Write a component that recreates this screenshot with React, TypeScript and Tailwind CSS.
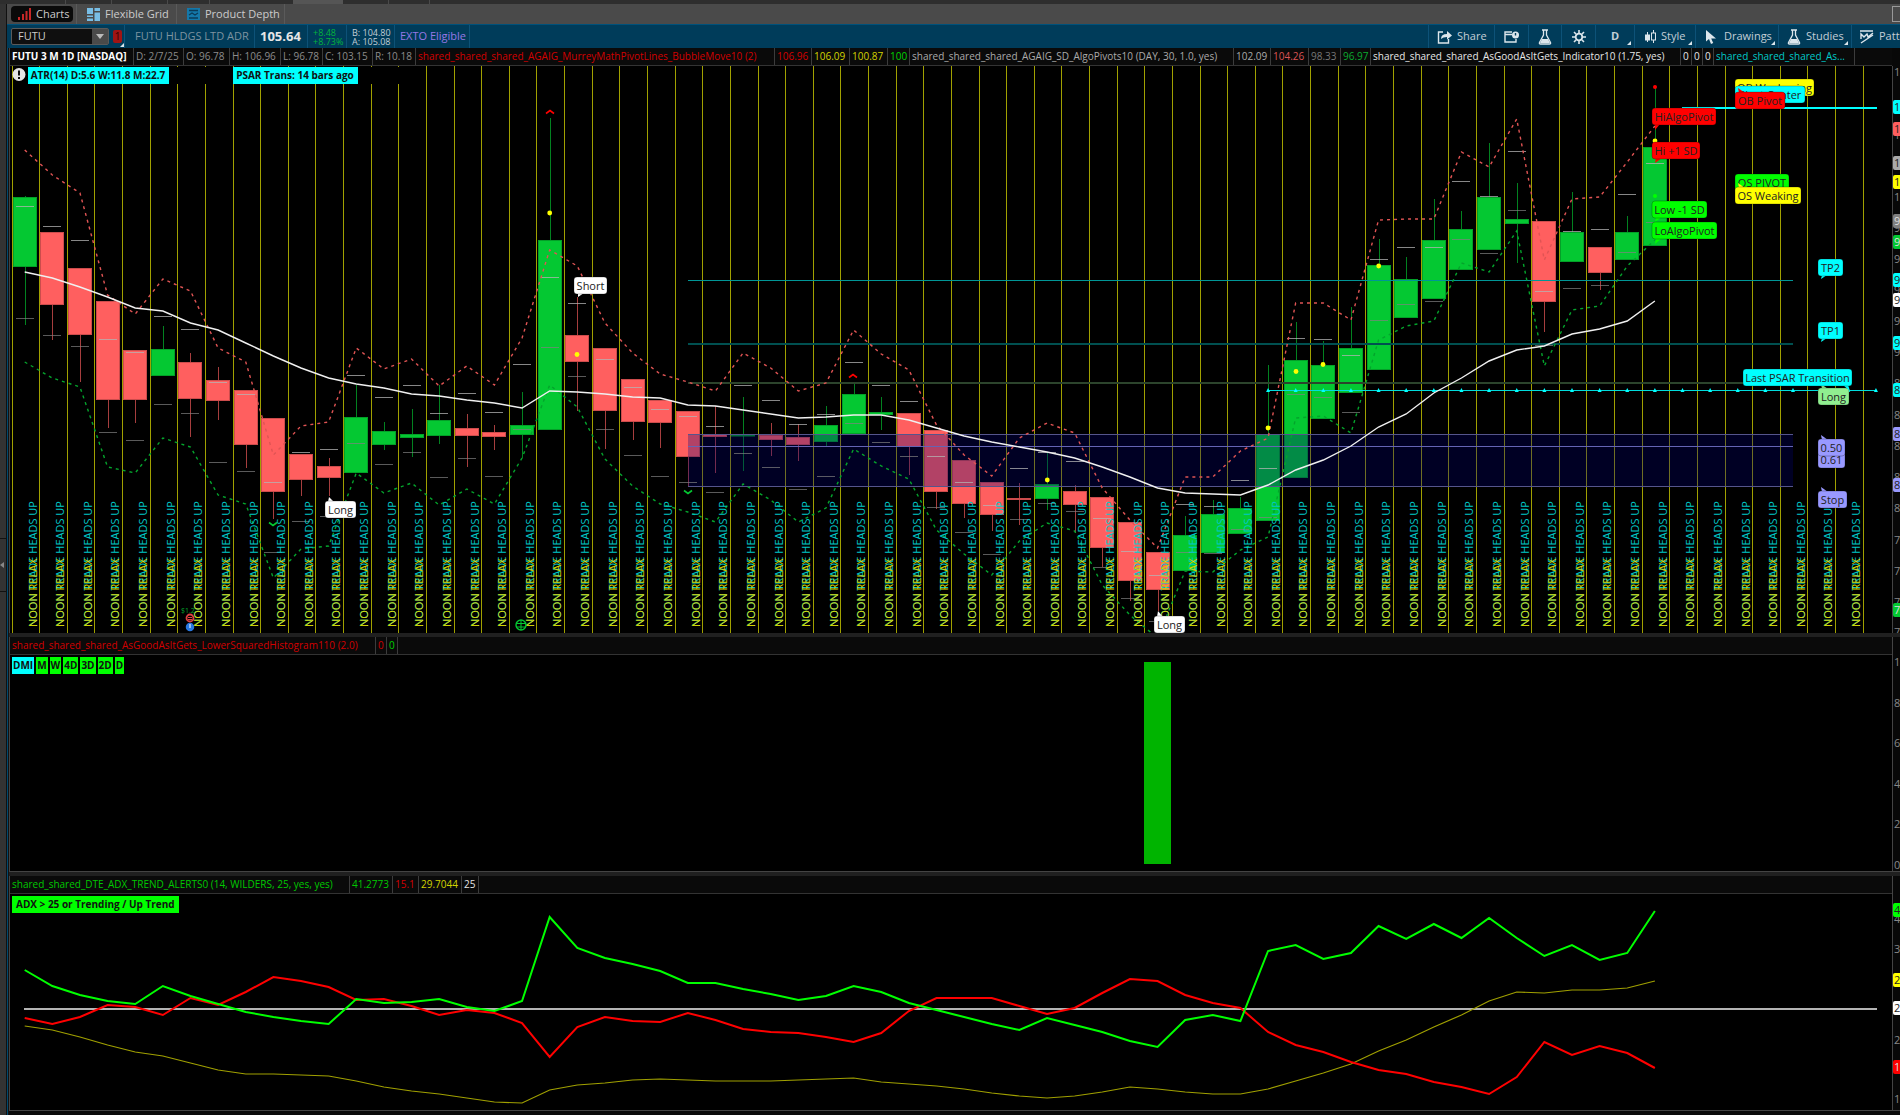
type Candle = [dir: 'g' | 'r', top: number, bottom: number, high: number, low: number];

const X0 = 24.7;
const STEP = 27.63;
const cx = (i: number) => X0 + STEP * i;

// body top, body bottom, wick top, wick bottom
const candles: Candle[] = [
  ['g', 197, 267, 196, 325], ['r', 232, 305, 232, 340], ['r', 268, 335, 268, 382], ['r', 301, 400, 301, 428],
  ['r', 350, 400, 350, 423], ['g', 349, 376, 326, 376], ['r', 362, 399, 353, 437], ['r', 380, 401, 367, 420],
  ['r', 390, 445, 390, 468], ['r', 418, 492, 418, 519], ['r', 454, 480, 454, 496], ['r', 466, 478, 458, 496],
  ['g', 417, 473, 385, 473], ['g', 431, 445, 422, 450], ['g', 434, 438, 409, 457], ['g', 420, 436, 385, 444],
  ['r', 428, 436, 414, 467], ['r', 432, 437, 425, 450], ['g', 425, 435, 392, 458], ['g', 240, 430, 118, 430],
  ['r', 335, 362, 297, 411], ['r', 348, 411, 348, 449], ['r', 379, 422, 379, 440], ['r', 400, 423, 400, 448],
  ['r', 411, 457, 411, 486], ['r', 434, 437, 406, 473], ['g', 435, 436, 397, 471], ['r', 435, 440, 423, 456],
  ['r', 437, 445, 424, 461], ['g', 425, 442, 406, 446], ['g', 394, 434, 383, 434], ['g', 412, 415, 397, 430],
  ['r', 413, 447, 413, 475], ['r', 430, 492, 430, 509], ['r', 460, 504, 460, 518], ['r', 482, 515, 482, 531],
  ['r', 498, 500, 483, 525], ['g', 484, 499, 452, 510], ['r', 491, 505, 485, 533], ['r', 497, 548, 497, 567],
  ['r', 522, 581, 522, 601], ['r', 552, 590, 552, 611], ['g', 535, 571, 516, 571], ['g', 514, 553, 500, 553],
  ['g', 508, 534, 497, 534], ['g', 434, 521, 365, 521], ['g', 360, 478, 322, 478], ['g', 365, 419, 341, 419],
  ['g', 348, 393, 307, 393], ['g', 265, 370, 239, 370], ['g', 279, 318, 257, 318], ['g', 240, 299, 199, 299],
  ['g', 229, 270, 211, 270], ['g', 197, 250, 143, 250], ['g', 219, 224, 183, 263], ['r', 221, 302, 221, 332],
  ['g', 232, 262, 192, 262], ['r', 247, 273, 247, 290], ['g', 232, 260, 216, 260], ['g', 147, 246, 87, 246],
];

const pivots = [
  [206, 318], [226, 335], [240, 346], [339, 432], [352, 440], [316, 404], [329, 413], [382, 462], [394, 471], [482, 552],
  [452, 521], [449, 516], [375, 443], [397, 464], [385, 452], [413, 477], [393, 458], [412, 476], [364, 429], [277, 347],
  [303, 376], [359, 429], [387, 455], [409, 476], [416, 482], [426, 492], [385, 453], [400, 467], [424, 489], [414, 476],
  [362, 423], [385, 442], [401, 456], [456, 507], [482, 532], [505, 554], [468, 519], [452, 503], [461, 511], [518, 567],
  [551, 598], [575, 621], [504, 552], [506, 553], [480, 529], [468, 517], [338, 394], [339, 397], [355, 412], [259, 320],
  [247, 304], [247, 301], [181, 239], [196, 253], [151, 210], [291, 345], [231, 288], [229, 285], [194, 252], [163, 222],
];

const upperBand = [
  150, 175, 193, 295, 314, 279, 291, 348, 362, 455, 426, 422, 348, 369, 359, 386, 366, 385, 338, 250,
  266, 323, 353, 374, 382, 391, 353, 368, 391, 383, 330, 354, 370, 425, 455, 476, 438, 423, 433, 488,
  520, 548, 477, 477, 451, 438, 303, 303, 320, 220, 219, 219, 152, 167, 119, 260, 199, 197, 162, 126,
];

const lowerBand = [
  362, 378, 387, 467, 473, 438, 447, 495, 504, 578, 549, 546, 473, 493, 483, 505, 489, 504, 458, 385,
  407, 459, 486, 504, 512, 522, 484, 500, 522, 508, 449, 466, 479, 530, 554, 575, 541, 523, 531, 585,
  615, 638, 571, 572, 550, 537, 418, 416, 433, 340, 326, 321, 263, 272, 231, 366, 310, 306, 266, 240,
];

const average = [
  272, 278, 287, 297, 308, 311, 323, 330, 343, 356, 368, 378, 384, 388, 394, 396, 400, 403, 408, 391,
  392, 394, 397, 398, 405, 406, 410, 414, 418, 417, 415, 415, 420, 428, 436, 442, 447, 452, 458, 467,
  477, 488, 493, 494, 495, 485, 470, 460, 446, 427, 414, 393, 378, 361, 350, 346, 334, 329, 321, 301,
];

const diPlus = [
  970, 986, 995, 1001, 1004, 986, 996, 1004, 1012, 1017, 1021, 1024, 999, 1003, 1002, 999, 1007, 1011, 1001, 917,
  948, 958, 964, 971, 983, 983, 989, 994, 1000, 996, 986, 992, 1003, 1010, 1017, 1024, 1030, 1018, 1025, 1032,
  1041, 1047, 1020, 1015, 1021, 951, 945, 959, 953, 926, 939, 924, 938, 918, 938, 956, 945, 960, 953, 911,
];

const diMinus = [
  1018, 1024, 1017, 1005, 1007, 1015, 998, 1005, 992, 977, 981, 987, 1000, 999, 1006, 1015, 1010, 1013, 1023, 1057,
  1027, 1017, 1021, 1022, 1013, 1020, 1029, 1032, 1033, 1037, 1042, 1033, 1011, 998, 998, 998, 1006, 1014, 1008, 993,
  979, 981, 995, 1003, 1008, 1032, 1045, 1052, 1062, 1070, 1074, 1082, 1087, 1094, 1077, 1042, 1055, 1046, 1053, 1068,
];

const adx = [
  1026, 1030, 1037, 1045, 1052, 1056, 1063, 1070, 1074, 1074, 1075, 1076, 1081, 1087, 1091, 1094, 1098, 1102, 1103, 1090,
  1085, 1083, 1080, 1079, 1080, 1081, 1081, 1081, 1080, 1079, 1078, 1082, 1084, 1086, 1089, 1093, 1096, 1098, 1096, 1092,
  1087, 1089, 1092, 1094, 1094, 1089, 1081, 1073, 1064, 1051, 1040, 1027, 1015, 1001, 992, 993, 990, 990, 988, 981,
];

const points = (values: number[]) => values.map((y, i) => `${cx(i)},${y}`).join(' ');

type Bubble = { x: number; y: number; w: number; fill: string; text: string; tail?: string };

const bubbles: Bubble[] = [
  { x: 574, y: 277, w: 33, fill: '#ffffff', text: 'Short', tail: '578,293 584,293 578,297' },
  { x: 325, y: 501, w: 31, fill: '#ffffff', text: 'Long', tail: '329,497 328,502 334,502' },
  { x: 1154, y: 616, w: 31, fill: '#ffffff', text: 'Long', tail: '1158,611 1157,617 1163,617' },
  { x: 1652, y: 108, w: 64, fill: '#ff0000', text: 'HiAlgoPivot', tail: '1655,124 1660,124 1655,130' },
  { x: 1652, y: 142, w: 48, fill: '#ff0000', text: 'Hi +1 SD', tail: '1656,158 1662,158 1655,163' },
  { x: 1652, y: 201, w: 55, fill: '#00ff00', text: 'Low -1 SD', tail: '1656,217 1662,217 1655,222' },
  { x: 1652, y: 222, w: 65, fill: '#00ff00', text: 'LoAlgoPivot', tail: '1656,238 1662,238 1655,244' },
  { x: 1735, y: 79, w: 79, fill: '#ffff00', text: 'OB Weakening' },
  { x: 1735, y: 86, w: 70, fill: '#00ffff', text: 'Pivot Center' },
  { x: 1735, y: 92, w: 50, fill: '#ff0000', text: 'OB Pivot', tail: '1738,88 1739,93 1745,93' },
  { x: 1735, y: 174, w: 54, fill: '#00ff00', text: 'OS PIVOT' },
  { x: 1735, y: 187, w: 66, fill: '#ffff00', text: 'OS Weaking', tail: '1738,183 1739,188 1745,188' },
  { x: 1818, y: 259, w: 25, fill: '#00ffff', text: 'TP2', tail: '1822,275 1827,275 1821,279' },
  { x: 1818, y: 322, w: 25, fill: '#00ffff', text: 'TP1', tail: '1822,338 1827,338 1821,342' },
  { x: 1818, y: 388, w: 31, fill: '#90ee90', text: 'Long', tail: '1821,384 1822,389 1828,389' },
  { x: 1743, y: 369, w: 109, fill: '#00ffff', text: 'Last PSAR Transition', tail: '1843,385 1848,385 1850,391' },
  { x: 1818, y: 451, w: 27, fill: '#9999ff', text: '0.61' },
  { x: 1818, y: 439, w: 27, fill: '#9999ff', text: '0.50', tail: '1821,435 1822,440 1828,440' },
  { x: 1818, y: 491, w: 29, fill: '#9999ff', text: 'Stop', tail: '1821,487 1822,492 1828,492' },
];

type Tick = { y: number; text: string; fill?: string; ink?: string };

const priceTicks: Tick[] = [
  { y: 72, text: '108' }, { y: 135, text: '104' }, { y: 197, text: '100' }, { y: 228, text: '98' }, { y: 259, text: '96' },
  { y: 290, text: '94' }, { y: 321, text: '92' }, { y: 352, text: '90' }, { y: 383, text: '88' }, { y: 415, text: '86' },
  { y: 446, text: '84' }, { y: 477, text: '82' }, { y: 508, text: '80' }, { y: 540, text: '78' }, { y: 571, text: '76' },
  { y: 602, text: '74' }, { y: 632, text: '72' },
  { y: 107, text: '106', fill: '#00ffff' }, { y: 129, text: '104', fill: '#ff5f5f' }, { y: 163, text: '102', fill: '#aaaaaa' },
  { y: 182, text: '100', fill: '#ffff00' }, { y: 221, text: '98', fill: '#808080', ink: '#ddd' },
  { y: 242, text: '97', fill: '#04c832', ink: '#ddd' }, { y: 280, text: '94', fill: '#00ffff' },
  { y: 300, text: '93', fill: '#ffffff' }, { y: 343, text: '90', fill: '#00ffff' }, { y: 390, text: '87', fill: '#00ffff' },
  { y: 434, text: '84', fill: '#9999ff' }, { y: 485, text: '81', fill: '#9999ff' },
  { y: 610, text: '73', fill: '#04c832', ink: '#ddd' },
];

const histTicks: Tick[] = [
  { y: 662, text: '100' }, { y: 703, text: '80' }, { y: 743, text: '60' }, { y: 784, text: '40' }, { y: 824, text: '20' },
  { y: 865, text: '0%' },
];

const adxTicks: Tick[] = [
  { y: 919, text: '40' }, { y: 949, text: '35' }, { y: 1040, text: '20' }, { y: 1099, text: '10' },
  { y: 910, text: '41', fill: '#00ff00' }, { y: 980, text: '29', fill: '#ffff00' }, { y: 1008, text: '25', fill: '#ffffff' },
  { y: 1067, text: '15', fill: '#ff0000', ink: '#ddd' },
];

const dots = [[549.7, 213], [577, 354.5], [1047.3, 480], [1268, 428], [1296, 371.5], [1323, 364.5], [1378.7, 266], [1655, 141]];

type Cell = { text: string; color: string; width: string; bold?: boolean };

const mainStudies: Cell[] = [
  { text: 'FUTU 3 M 1D [NASDAQ]', color: 'text-white', width: 'w-[124px]', bold: true },
  { text: 'D: 2/7/25', color: 'text-[#8c8c8c]', width: 'w-[50px]' },
  { text: 'O: 96.78', color: 'text-[#8c8c8c]', width: 'w-[46px]' },
  { text: 'H: 106.96', color: 'text-[#8c8c8c]', width: 'w-[51px]' },
  { text: 'L: 96.78', color: 'text-[#8c8c8c]', width: 'w-[42px]' },
  { text: 'C: 103.15', color: 'text-[#8c8c8c]', width: 'w-[50px]' },
  { text: 'R: 10.18', color: 'text-[#8c8c8c]', width: 'w-[43px]' },
  { text: 'shared_shared_shared_AGAIG_MurreyMathPivotLines_BubbleMove10 (2)', color: 'text-[#d20000]', width: 'w-[359px]' },
  { text: '106.96', color: 'text-[#d20000]', width: 'w-[37px]' },
  { text: '106.09', color: 'text-[#d2d200]', width: 'w-[38px]' },
  { text: '100.87', color: 'text-[#d2d200]', width: 'w-[38px]' },
  { text: '100', color: 'text-[#00d200]', width: 'w-[22px]' },
  { text: 'shared_shared_shared_AGAIG_SD_AlgoPivots10 (DAY, 30, 1.0, yes)', color: 'text-[#aaa]', width: 'w-[324px]' },
  { text: '102.09', color: 'text-[#aaa]', width: 'w-[37px]' },
  { text: '104.26', color: 'text-[#dc5454]', width: 'w-[38px]' },
  { text: '98.33', color: 'text-[#777]', width: 'w-[32px]' },
  { text: '96.97', color: 'text-[#0aaa30]', width: 'w-[30px]' },
  { text: 'shared_shared_shared_AsGoodAsItGets_Indicator10 (1.75, yes)', color: 'text-[#e6e6e6]', width: 'w-[310px]' },
  { text: '0', color: 'text-[#e6e6e6]', width: 'w-[11px]' },
  { text: '0', color: 'text-[#e6e6e6]', width: 'w-[11px]' },
  { text: '0', color: 'text-[#e6e6e6]', width: 'w-[11px]' },
  { text: 'shared_shared_shared_As...', color: 'text-[#00c8c8]', width: 'w-[141px]' },
];

const histStudies: Cell[] = [
  { text: 'shared_shared_shared_AsGoodAsItGets_LowerSquaredHistogram110 (2.0)', color: 'text-[#d20000]', width: 'w-[366px]' },
  { text: '0', color: 'text-[#d20000]', width: 'w-[11px]' },
  { text: '0', color: 'text-[#00d200]', width: 'w-[11px]' },
];

const adxStudies: Cell[] = [
  { text: 'shared_shared_DTE_ADX_TREND_ALERTS0 (14, WILDERS, 25, yes, yes)', color: 'text-[#00c800]', width: 'w-[340px]' },
  { text: '41.2773', color: 'text-[#00c800]', width: 'w-[43px]' },
  { text: '15.1', color: 'text-[#d20000]', width: 'w-[26px]' },
  { text: '29.7044', color: 'text-[#d2d200]', width: 'w-[43px]' },
  { text: '25', color: 'text-[#e6e6e6]', width: 'w-[17px]' },
];

function StudyRow({ cells }: { cells: Cell[] }) {
  return (
    <div className="flex h-[18px] overflow-hidden border-b border-[#333] bg-[#0a0a0a] text-[10px] leading-[17px] whitespace-nowrap">
      {cells.map((cell, i) => (
        <span
          key={i}
          className={`shrink-0 border-r border-[#3c3c3c] pl-[2px] ${cell.width} ${cell.color} ${cell.bold ? 'font-bold' : ''}`}
        >
          {cell.text}
        </span>
      ))}
    </div>
  );
}

function Axis({ top, height, ticks }: { top: number; height: number; ticks: Tick[] }) {
  return (
    <div className="w-2 shrink-0 overflow-hidden border-l border-[#444] bg-[#080808]">
      <svg className="block w-[30px]" viewBox={`1893 ${top} 30 ${height}`} height={height} fontSize="11">
        {ticks.map((t) => (
          <g key={t.y}>
            {t.fill && <rect x="1893" y={t.y - 7} width="40" height="14" rx="2" fill={t.fill} />}
            <text x="1894" y={t.y + 4} fill={t.fill ? t.ink ?? '#222' : '#888'}>
              {t.text}
            </text>
          </g>
        ))}
      </svg>
    </div>
  );
}

function PriceChart() {
  const grid = Array.from({ length: 68 }, (_, i) => Math.round(11.5 + STEP * i));
  return (
    <svg className="block h-auto w-full" viewBox="10 66 1882 567" role="img" aria-label="FUTU price chart">
      {grid.map((x) => (
        <rect key={x} x={x} y="66" width="1" height="567" fill="#a0a000" />
      ))}
      <rect x="169" y="67" width="63" height="17" fill="#000" />
      <rect x="358" y="67" width="43" height="17" fill="#000" />

      {candles.map(([dir, top, bottom, high, low], i) => (
        <g key={i}>
          <rect x={Math.round(cx(i))} y={high} width="1" height={low - high} fill={dir === 'g' ? '#028220' : '#a63e3e'} />
          <rect
            x={Math.round(cx(i)) - 11.5}
            y={top + 0.5}
            width="23"
            height={Math.max(bottom - top - 1, 0.5)}
            fill={dir === 'g' ? '#04c832' : '#ff5f5f'}
            stroke={dir === 'g' ? '#03a028' : '#cc4c4c'}
          />
        </g>
      ))}
      <rect x="688" y="434" width="1105" height="53" fill="#000078" fillOpacity="0.3" />

      {pivots.map(([hi, lo], i) => (
        <g key={i}>
          <rect x={Math.round(cx(i)) - 9} y={hi} width="18" height="1" fill="#b4b4b4" fillOpacity="0.75" />
          <rect x={Math.round(cx(i)) - 9} y={lo} width="18" height="1" fill="#808080" fillOpacity="0.7" />
        </g>
      ))}

      <rect x="688" y="280" width="1105" height="1" fill="#009696" />
      <rect x="688" y="343" width="1105" height="2" fill="#005050" />
      <rect x="688" y="382" width="1105" height="2" fill="#2c442c" />
      <rect x="688" y="434" width="1105" height="1" fill="#55558c" />
      <rect x="688" y="446" width="1105" height="1" fill="#6464b4" />
      <rect x="688" y="486" width="1105" height="1" fill="#55558c" />
      <rect x="1682" y="107" width="195" height="2" fill="#00ffff" />
      <rect x="1268" y="390" width="609" height="1" fill="#00dcdc" />
      {Array.from({ length: 23 }, (_, i) => cx(45 + i)).map((x) => (
        <path key={x} d={`M${x - 2} 392 L${x} 388 L${x + 2} 392Z`} fill="#00ffff" />
      ))}

      <polyline points={points(upperBand)} fill="none" stroke="#e05454" strokeWidth="1.4" strokeDasharray="3 4" />
      <polyline points={points(lowerBand)} fill="none" stroke="#04a42c" strokeWidth="1.4" strokeDasharray="3 4" />
      <polyline points={points(average)} fill="none" stroke="#f0f0f0" strokeWidth="1.4" />

      {grid.slice(0, -1).map((x) => (
        <g key={x} fontSize="11" transform={`translate(${x + 25} 627) rotate(-90)`}>
          <text fill="#00c8c8">NOON TRADE HEADS UP</text>
          <text fill="#d2d200">NOON RELAX</text>
        </g>
      ))}

      {dots.map(([x, y]) => (
        <circle key={x} cx={x} cy={y} r="2.4" fill="#ffff00" />
      ))}
      <circle cx="1655" cy="87" r="2" fill="#ff0000" />
      <circle cx="1655" cy="196" r="2" fill="#00ff00" />
      <path d="M546 113.500 L550 110.500 L554 113.500 M849 377.500 L853 374.500 L857 377.500" fill="none" stroke="#ff0000" strokeWidth="1.6" />
      <path d="M269 522.500 L273 525.500 L277 522.500 M684 490.500 L688 493.500 L692 490.500" fill="none" stroke="#04c832" strokeWidth="1.6" />

      <text x="181" y="613" fontSize="7" fill="#04a42c">$1.2</text>
      <circle cx="190" cy="618" r="3.500" fill="none" stroke="#e04040" strokeWidth="1.8" />
      <circle cx="190" cy="627" r="3.500" fill="#2878e0" stroke="#2878e0" strokeWidth="1.5" />
      <path d="M188 617.500h4M188 619.500h4" stroke="#e04040" />
      <path d="M190 624v4" stroke="#fff" />
      <circle cx="521" cy="625" r="5" fill="none" stroke="#04c832" strokeWidth="1.4" />
      <path d="M516 623.500h10M516 627h10M521 620v10" stroke="#04c832" />

      {bubbles.map((b, i) => (
        <g key={i}>
          {b.tail && <polygon points={b.tail} fill={b.fill} />}
          <rect x={b.x} y={b.y} width={b.w} height="17" rx="3" fill={b.fill} stroke="#000" strokeOpacity="0.25" />
          <text x={b.x + b.w / 2} y={b.y + 13} fontSize="11" textAnchor="middle" fill="#222">
            {b.text}
          </text>
        </g>
      ))}

      <g fontSize="10" fontWeight="bold" textAnchor="middle">
        <circle cx="19" cy="74.500" r="6.500" fill="#e6e6e6" />
        <path d="M19 70.500v5M19 77v2" stroke="#111" strokeWidth="2" />
        <rect x="28" y="67" width="141" height="17" fill="#00ffff" />
        <text x="98" y="79" fill="#111">ATR(14) D:5.6 W:11.8 M:22.7</text>
        <rect x="233" y="67" width="125" height="17" fill="#00ffff" />
        <text x="295" y="79" fill="#111">PSAR Trans: 14 bars ago</text>
      </g>
    </svg>
  );
}

function HistogramChart() {
  const tags = ['DMI', 'M', 'W', '4D', '3D', '2D', 'D'];
  return (
    <div className="relative">
      <svg className="block h-auto w-full" viewBox="10 655 1882 216" role="img" aria-label="Squared histogram">
        <rect x="1144" y="662" width="27" height="202" fill="#00b400" />
      </svg>
      <div className="absolute top-[2px] left-[2px] flex gap-[2px] text-[10px] leading-[17px] font-bold text-[#111]">
        {tags.map((tag) => (
          <span key={tag} className={`px-[1px] ${tag === 'DMI' ? 'bg-[#00ffff]' : 'bg-[#00ff00]'}`}>
            {tag}
          </span>
        ))}
      </div>
    </div>
  );
}

function AdxChart() {
  return (
    <div className="relative">
      <svg className="block h-auto w-full" viewBox="10 894 1882 216" role="img" aria-label="ADX trend">
        <rect x="24" y="1008" width="1853" height="2" fill="#b4b4b4" />
        <polyline points={points(adx)} fill="none" stroke="#a0a000" strokeWidth="1.2" />
        <polyline points={points(diMinus)} fill="none" stroke="#ff0000" strokeWidth="2" />
        <polyline points={points(diPlus)} fill="none" stroke="#00ff00" strokeWidth="2" />
      </svg>
      <span className="absolute top-[2px] left-[2px] bg-[#00ff00] px-1 text-[10px] leading-[17px] font-bold text-[#111]">
        ADX &gt; 25 or Trending / Up Trend
      </span>
    </div>
  );
}

function Flask() {
  return (
    <svg className="h-4 w-[14px]" viewBox="0 0 14 16" fill="none" stroke="#dce6ec" strokeWidth="1.3">
      <path d="M4 1h6M5.500 1v5L1.500 13.500q-.5 1.500 1 1.500h9q1.500 0 1-1.500L8.500 6V1" />
      <path d="M4 10h6l2 4H2z" fill="#dce6ec" stroke="none" />
    </svg>
  );
}

function Corner() {
  return (
    <svg className="absolute right-[3px] bottom-[3px] h-1 w-1" viewBox="0 0 4 4">
      <path d="M4 0v4H0z" fill="#dce6ec" />
    </svg>
  );
}

function Toolbar() {
  const tool = 'relative flex shrink-0 items-center border-l border-[#0d5278]';
  return (
    <div className="flex h-6 items-stretch border-t border-[#00517a] bg-[#003c5a] text-[11px] text-[#c3ced6]">
      <div className="flex items-center pl-1">
        <div className="flex h-[17px] w-[98px] items-center rounded-[2px] border border-[#5a5a5a] bg-[#0f0f0f]">
          <input
            aria-label="Symbol"
            defaultValue="FUTU"
            className="w-full min-w-0 flex-1 bg-transparent pl-[6px] text-[#ccc] outline-none"
          />
          <button aria-label="Symbol list" className="flex h-full w-4 items-center justify-center bg-[#4a4a4a]">
            <svg className="h-[5px] w-2" viewBox="0 0 8 5"><path d="M0 0h8L4 5z" fill="#bbb" /></svg>
          </button>
        </div>
        <button aria-label="Link color 1" className="relative ml-1 h-[13px] w-[9px] rounded-[2px] bg-[#a01414] text-[10px] leading-[13px] text-[#300]">
          1
          <svg className="absolute -right-[2px] -bottom-1 h-1 w-1" viewBox="0 0 4 4"><path d="M4 0v4H0z" fill="#dce6ec" /></svg>
        </button>
      </div>
      <div className="ml-[2px] flex w-[130px] items-center border-l border-[#0d5278] pl-[10px] whitespace-nowrap text-[#7d93a0]">
        FUTU HLDGS LTD ADR
      </div>
      <div className="flex w-[53px] items-center border-l border-[#0d5278] pl-[5px] text-[13px] font-bold text-[#e6e6e6]">105.64</div>
      <div className="flex w-[39px] flex-col justify-center border-l border-[#0d5278] pl-[5px] text-[9px] leading-[9px] text-[#04b43c]">
        <span>+8.48</span>
        <span>+8.73%</span>
      </div>
      <div className="flex w-[48px] flex-col justify-center border-l border-[#0d5278] pl-[5px] text-[9px] leading-[9px] whitespace-nowrap">
        <span>B: 104.80</span>
        <span>A: 105.08</span>
      </div>
      <div className="flex w-[76px] items-center border-x border-[#0d5278] pl-[5px] whitespace-nowrap text-[#9678e6]">EXTO Eligible</div>

      <div className="ml-auto flex">
        <button className={`${tool} w-[66px] gap-[5px] pl-2`}>
          <svg className="h-[14px] w-[15px]" viewBox="0 0 15 14" fill="none" stroke="#dce6ec" strokeWidth="1.4">
            <path d="M6 2H1.500v11h10V9" />
            <path d="M4 9q0-5 6-5V1l5 4.500-5 4V7q-4 0-6 2z" fill="#dce6ec" stroke="none" />
          </svg>
          Share
        </button>
        <button aria-label="Notes" className={`${tool} w-[34px] justify-center`}>
          <svg className="h-3 w-[15px]" viewBox="0 0 15 12" fill="none" stroke="#dce6ec" strokeWidth="1.4">
            <path d="M8 1H1v10h11V8M1 3.500h7" />
            <circle cx="11.500" cy="4" r="3.500" fill="#dce6ec" stroke="none" />
            <path d="M11.500 2v2.500" stroke="#003c5a" />
          </svg>
        </button>
        <button aria-label="Edit studies" className={`${tool} w-[33px] justify-center`}><Flask /></button>
        <button aria-label="Settings" className={`${tool} w-[34px] justify-center`}>
          <svg className="h-[14px] w-[14px]" viewBox="0 0 14 14" fill="none" stroke="#dce6ec">
            <circle cx="7" cy="7" r="3.300" strokeWidth="1.8" />
            <path d="M7 0v3M7 11v3M0 7h3M11 7h3M2 2l2.200 2.200M9.800 9.800L12 12M2 12l2.200-2.200M9.800 4.200L12 2" strokeWidth="1.6" />
          </svg>
        </button>
        <button className={`${tool} w-[39px] justify-center font-bold`}>D<Corner /></button>
        <button className={`${tool} w-[61px] gap-[5px] pl-[10px]`}>
          <svg className="h-[14px] w-[11px]" viewBox="0 0 11 14" fill="none" stroke="#dce6ec">
            <path d="M2.500 2v10M8.500 0v3M8.500 10v3" />
            <rect x="0.500" y="5" width="4" height="5" fill="#dce6ec" />
            <rect x="6.500" y="3" width="4" height="7" />
          </svg>
          Style
          <Corner />
        </button>
        <button className={`${tool} w-[83px] gap-[7px] pl-[10px]`}>
          <svg className="h-[14px] w-[11px]" viewBox="0 0 11 14"><path d="M0 0v11.500l3-2.500 2 5 2.200-1-2-4.500H10z" fill="#dce6ec" /></svg>
          Drawings
          <Corner />
        </button>
        <button className={`${tool} w-[73px] gap-[5px] pl-2`}><Flask />Studies<Corner /></button>
        <button className={`${tool} w-[49px] gap-[5px] overflow-hidden pl-2`}>
          <svg className="h-[14px] w-[14px] shrink-0" viewBox="0 0 14 14" fill="none" stroke="#dce6ec" strokeWidth="1.4">
            <path d="M0 1h13M1 13L13 5M1 9V4l3 3 3-3 1 3 5-4" />
          </svg>
          Patterns
        </button>
      </div>
    </div>
  );
}

export default function App() {
  return (
    <div className="flex min-h-screen flex-col overflow-hidden bg-[#2e2e2e] font-['Open_Sans','Noto_Sans',sans-serif]">
      <div className="flex h-1 bg-[#2e2e2e]">
        <div className="w-[66px] border-r border-[#4a4a4a]" />
        <div className="w-[46px] border-r border-[#4a4a4a]" />
        <div className="w-[56px] border-r border-[#4a4a4a]" />
        <div className="w-[42px] border-r border-[#4a4a4a]" />
        <div className="w-[83px]" />
        <div className="w-[50px] bg-[#555]" />
        <div className="w-[46px] border-r border-[#4a4a4a]" />
        <div className="w-[41px] border-r border-[#4a4a4a]" />
      </div>
      <div className="flex flex-1">
        <aside className="relative flex w-[7px] shrink-0 flex-col border-r border-[#111] bg-[#333]">
          <div className="mt-[534px] flex h-[54px] items-center border-y border-[#111]">
            <button aria-label="Expand sidebar">
              <svg className="h-[6px] w-1" viewBox="0 0 4 6"><path d="M4 0v6L0 3z" fill="#888" /></svg>
            </button>
          </div>
        </aside>
        <main className="flex min-w-0 flex-1 flex-col">
          <nav className="flex h-5 items-center bg-[#4a4a4a] text-[11px] text-[#ccc]">
            <button className="ml-1 flex h-4 w-[62px] items-center gap-[5px] rounded bg-[#0a0a0a] pl-[7px]">
              <svg className="h-3 w-[13px]" viewBox="0 0 13 12" fill="#c82828">
                <path d="M0 9h2v3H0zM4 6h2v6H4zM7.500 3h2v9h-2zM11 0h2v12h-2z" />
              </svg>
              Charts
            </button>
            <button className="ml-[3px] flex h-full w-[100px] items-center gap-[5px] border-l border-[#5a5a5a] pl-[10px] whitespace-nowrap">
              <svg className="h-[13px] w-[13px]" viewBox="0 0 13 13" fill="#78bee6">
                <path d="M0 0h6v6H0zM7.500 0H13v3H7.500zM7.500 4.500H13V13H7.500zM0 7.500h6V9H0zM0 10.500h6V13H0z" />
              </svg>
              Flexible Grid
            </button>
            <button className="flex h-full w-[109px] items-center gap-[5px] border-x border-[#5a5a5a] pl-[10px] whitespace-nowrap">
              <svg className="h-3 w-[13px]" viewBox="0 0 13 12">
                <rect width="13" height="12" fill="#1478aa" />
                <path d="M2 2.500h9M2 7l3-2 3 2 3-2M2 10h9" fill="none" stroke="#0a3c5a" strokeWidth="1.3" />
              </svg>
              Product Depth
            </button>
            <button aria-label="Layout menu" className="ml-auto h-4 w-2 border border-r-0 border-[#999]" />
          </nav>
          <Toolbar />
          <div className="flex flex-1 flex-col border-l border-[#004a70] bg-[#111] pl-[1px]">
            <section className="flex">
              <div className="min-w-0 flex-1 border-l border-[#444] bg-black">
                <StudyRow cells={mainStudies} />
                <PriceChart />
              </div>
              <div className="flex bg-[#080808] pt-[18px]">
                <Axis top={66} height={567} ticks={priceTicks} />
              </div>
            </section>
            <div className="h-1 bg-[#202020]" />
            <section className="flex">
              <div className="min-w-0 flex-1 border-l border-[#444] bg-black">
                <StudyRow cells={histStudies} />
                <HistogramChart />
              </div>
              <Axis top={637} height={234} ticks={histTicks} />
            </section>
            <div className="h-[5px] border-t border-[#444] bg-[#202020]" />
            <section className="flex">
              <div className="min-w-0 flex-1 border-l border-[#444] bg-black">
                <StudyRow cells={adxStudies} />
                <AdxChart />
              </div>
              <Axis top={876} height={234} ticks={adxTicks} />
            </section>
            <div className="h-[5px] border-t border-[#444] bg-[#0a0a0a]" />
          </div>
        </main>
      </div>
    </div>
  );
}
